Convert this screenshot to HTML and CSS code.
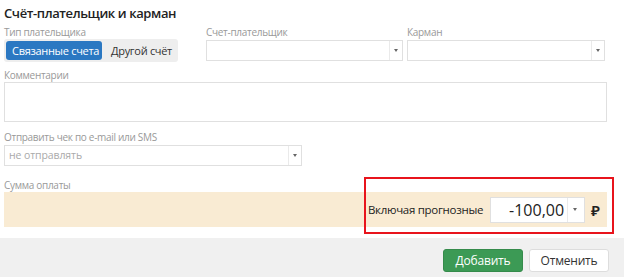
FILE: index.html
```html
<!DOCTYPE html>
<html lang="ru">
<head>
  <meta charset="UTF-8" />
  <title>Счёт-плательщик и карман</title>
  <link rel="stylesheet" href="styles.css">
</head>
<body>
  <div class="dialog">
    <h2 class="title">Счёт-плательщик и карман</h2>

    <div class="row">
      <div class="field field-type">
        <label>Тип плательщика</label>
        <div class="toggle">
          <span class="toggle-btn active">Связанные счета</span>
          <span class="toggle-btn">Другой счёт</span>
        </div>
      </div>
      <div class="field field-account">
        <label>Счет-плательщик</label>
        <div class="select"><span class="select-value"></span><span class="select-arrow"></span></div>
      </div>
      <div class="field field-pocket">
        <label>Карман</label>
        <div class="select"><span class="select-value"></span><span class="select-arrow"></span></div>
      </div>
    </div>

    <div class="field field-comment">
      <label>Комментарии</label>
      <div class="textarea"></div>
    </div>

    <div class="field field-send">
      <label>Отправить чек по e-mail или SMS</label>
      <div class="select"><span class="select-value placeholder">не отправлять</span><span class="select-arrow"></span></div>
    </div>

    <div class="field field-sum">
      <label>Сумма оплаты</label>
      <div class="sum-band">
        <div class="sum-total">
          <span class="sum-caption">Включая прогнозные</span>
          <div class="sum-input"><span class="sum-value">-100,00</span><span class="select-arrow"></span></div>
          <span class="currency">₽</span>
        </div>
      </div>
    </div>
  </div>

  <footer class="actions">
    <button class="btn btn-primary">Добавить</button>
    <button class="btn">Отменить</button>
  </footer>
</body>
</html>
```

FILE: styles.css
```css
body {
  margin: 0;
  font-family: 'Open Sans', 'Noto Sans', sans-serif;
  color: #333;
  background: #fff;
}

.dialog {
  padding: 2px 16px 0 4px;
  height: 236px;
}

.title {
  margin: 0;
  font-size: 13px;
  line-height: 22px;
  font-weight: 600;
  letter-spacing: -0.4px;
  color: #222;
}

.field label {
  display: block;
  font-size: 10px;
  line-height: 13px;
  color: #999;
  letter-spacing: -0.3px;
  white-space: nowrap;
}

.row {
  display: flex;
  margin-top: 2px;
}

.field-type {
  width: 174px;
  margin-right: 28px;
}

.field-account {
  width: 197px;
  margin-right: 4px;
}

.field-pocket {
  width: 198px;
}

.toggle {
  display: flex;
  align-items: center;
  gap: 3px;
  height: 23px;
  padding: 0 2px;
  background: #eeeeee;
  border-radius: 3px;
  box-sizing: border-box;
}

.toggle-btn {
  font-size: 11px;
  line-height: 19px;
  padding: 0 6px;
  color: #333;
  letter-spacing: -0.3px;
  white-space: nowrap;
}

.toggle-btn.active {
  width: 96px;
  box-sizing: border-box;
  text-align: center;
  background: #2b78c2;
  color: #fff;
  border-radius: 3px;
}

.select {
  display: flex;
  height: 21px;
  margin-top: 1px;
  border: 1px solid #e0e0e0;
  box-sizing: border-box;
  background: #fff;
}

.select-value {
  flex: 1;
  font-size: 10.5px;
  line-height: 19px;
  padding-left: 4px;
  letter-spacing: -0.1px;
}

.select-value.placeholder {
  color: #aaa;
}

.select-arrow {
  width: 12px;
  border-left: 1px solid #eaeaea;
  position: relative;
}

.select-arrow::after {
  content: "";
  position: absolute;
  left: 4px;
  top: 8px;
  border-left: 2.5px solid transparent;
  border-right: 2.5px solid transparent;
  border-top: 3px solid #666;
}

.field-comment {
  margin-top: 7px;
  width: 603px;
}

.textarea {
  height: 40px;
  border: 1px solid #e0e0e0;
  box-sizing: border-box;
}

.field-send {
  margin-top: 9px;
  width: 298px;
}

.field-sum {
  margin-top: 13px;
  width: 603px;
}

.sum-band {
  display: flex;
  justify-content: flex-end;
  height: 35px;
  background: #f9ebd3;
}

.sum-total {
  position: relative;
  display: flex;
  align-items: center;
  padding-right: 7px;
}

.sum-total::after {
  content: "";
  position: absolute;
  left: -4px;
  right: -7px;
  top: -15px;
  bottom: -7px;
  border: 2px solid #e8141c;
}

.sum-caption {
  font-size: 11.5px;
  color: #222;
  margin-right: 7px;
  letter-spacing: -0.3px;
}

.sum-input {
  display: flex;
  width: 95px;
  height: 26px;
  background: #fff;
  border: 1px solid #e0e0e0;
  box-sizing: border-box;
}

.sum-value {
  flex: 1;
  text-align: right;
  font-size: 16px;
  line-height: 24px;
  padding-right: 3px;
  color: #222;
}

.sum-input .select-arrow {
  width: 16px;
}

.sum-input .select-arrow::after {
  left: 5px;
  top: 10px;
}

.currency {
  margin-left: 6px;
  font-size: 15px;
  font-weight: 600;
  color: #222;
}

.actions {
  display: flex;
  justify-content: flex-end;
  gap: 6px;
  height: 41px;
  padding: 11px 15px 0 0;
  box-sizing: border-box;
  background: #f0f0f0;
}

.btn {
  width: 80px;
  height: 23px;
  font-family: 'Open Sans', 'Noto Sans', sans-serif;
  font-size: 12px;
  color: #333;
  background: #fff;
  border: 1px solid #ddd;
  border-radius: 3px;
  letter-spacing: -0.2px;
  padding: 0;
}

.btn-primary {
  background: #3c9a55;
  border-color: #358b4b;
  color: #fff;
}
```
